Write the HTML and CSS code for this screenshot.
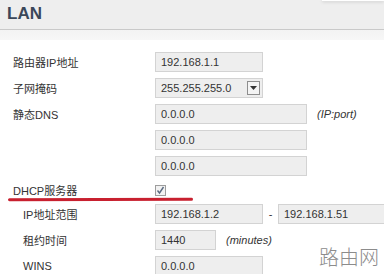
FILE: index.html
```html
<!DOCTYPE html>
<html>
    <head>
        <meta charset="utf-8">
        <title>LAN</title>
        <link rel="stylesheet" href="styles.css">
    </head>
    <body>
        <div class="header">
            <h3>LAN</h3>
            <div class="top-box"></div>
        </div>
        <div class="band"></div>

        <div class="form">
            <div class="row">
                <label>路由器IP地址</label>
                <div class="ipt w108">192.168.1.1</div>
            </div>
            <div class="row">
                <label>子网掩码</label>
                <div class="ipt w108 select">
                    <span>255.255.255.0</span>
                    <span class="arrow">
                        <svg width="7" height="4" viewBox="0 0 7 4"><path d="M0 0h7L3.5 4z" fill="#333"/></svg>
                    </span>
                </div>
            </div>
            <div class="row">
                <label>静态DNS</label>
                <div class="ipt w152">0.0.0.0</div>
                <span class="note">(IP:port)</span>
            </div>
            <div class="row">
                <label></label>
                <div class="ipt w152">0.0.0.0</div>
            </div>
            <div class="row">
                <label></label>
                <div class="ipt w152">0.0.0.0</div>
            </div>
            <div class="row dhcp">
                <label>DHCP服务器</label>
                <span class="chk">
                    <svg width="9" height="9" viewBox="0 0 9 9"><path d="M1.5 4.5l2 2.5 4-6" fill="none" stroke="#5a6a80" stroke-width="1.4"/></svg>
                </span>
            </div>
            <div class="row sub">
                <label>IP地址范围</label>
                <div class="ipt w108">192.168.1.2</div>
                <span class="dash">-</span>
                <div class="ipt w120">192.168.1.51</div>
            </div>
            <div class="row sub">
                <label>租约时间</label>
                <div class="ipt w61">1440</div>
                <span class="note">(minutes)</span>
            </div>
            <div class="row sub">
                <label>WINS</label>
                <div class="ipt w108">0.0.0.0</div>
            </div>
        </div>

        <div class="mark">路由网</div>
    </body>
</html>
```

FILE: styles.css
```css
body{
    margin: 0;
    width: 384px;
    height: 274px;
    overflow: hidden;
    background: #fff;
    font-family: "Liberation Sans", "Noto Sans CJK SC", sans-serif;
    font-size: 11px;
    color: #333;
    position: relative;
}
.header{
    height: 29px;
    background: #eeeeee;
    border-bottom: 1px solid #c9c9c9;
    display: flex;
    justify-content: space-between;
}
.header h3{
    margin: 0;
    padding: 4px 0 0 7px;
    font-size: 17px;
    font-weight: bold;
    color: #3b4759;
}
.top-box{
    width: 62px;
    height: 1px;
    background: #fff;
    box-shadow: 0 1px 3px #bbb;
}
.band{
    height: 10px;
    background: linear-gradient(#f3f3f3, #f7f7f7);
}
.form{
    padding: 9px 0 0 13px;
}
.row{
    display: flex;
    align-items: center;
    height: 26px;
}
.row > *{
    flex: none;
}
.row label{
    width: 142px;
}
.row.sub label{
    width: 132px;
    padding-left: 10px;
}
.row.dhcp{
    height: 22px;
    position: relative;
}
.row.dhcp:after{
    content: '';
    position: absolute;
    left: -5px;
    top: 19px;
    width: 185px;
    height: 3px;
    border-radius: 2px;
    background: #c8202f;
    transform: rotate(-0.2deg);
}
.ipt{
    box-sizing: border-box;
    height: 20px;
    line-height: 18px;
    border: 1px solid #d3d3d3;
    background: #eeeeee;
    padding-left: 5px;
}
.w108{ width: 108px; }
.w152{ width: 152px; }
.w61{ width: 61px; }
.w120{ width: 120px; }
.select{
    display: flex;
    justify-content: space-between;
    align-items: center;
    padding-right: 2px;
}
.select .arrow{
    width: 13px;
    height: 14px;
    box-sizing: border-box;
    border: 1px solid #8e8e8e;
    background: #f4f4f4;
    display: flex;
    align-items: center;
    justify-content: center;
}
.note{
    font-style: italic;
    margin-left: 10px;
}
.dash{
    width: 15px;
    text-align: center;
}
.chk{
    width: 11px;
    height: 11px;
    box-sizing: border-box;
    border: 1px solid #9d9d9d;
    background: #f2f2f2;
    display: flex;
    align-items: center;
    justify-content: center;
}
.mark{
    position: absolute;
    right: 5px;
    bottom: 3px;
    font-family: "Noto Sans CJK SC", sans-serif;
    font-weight: 300;
    font-size: 20px;
    color: #8c8c8c;
}
```
